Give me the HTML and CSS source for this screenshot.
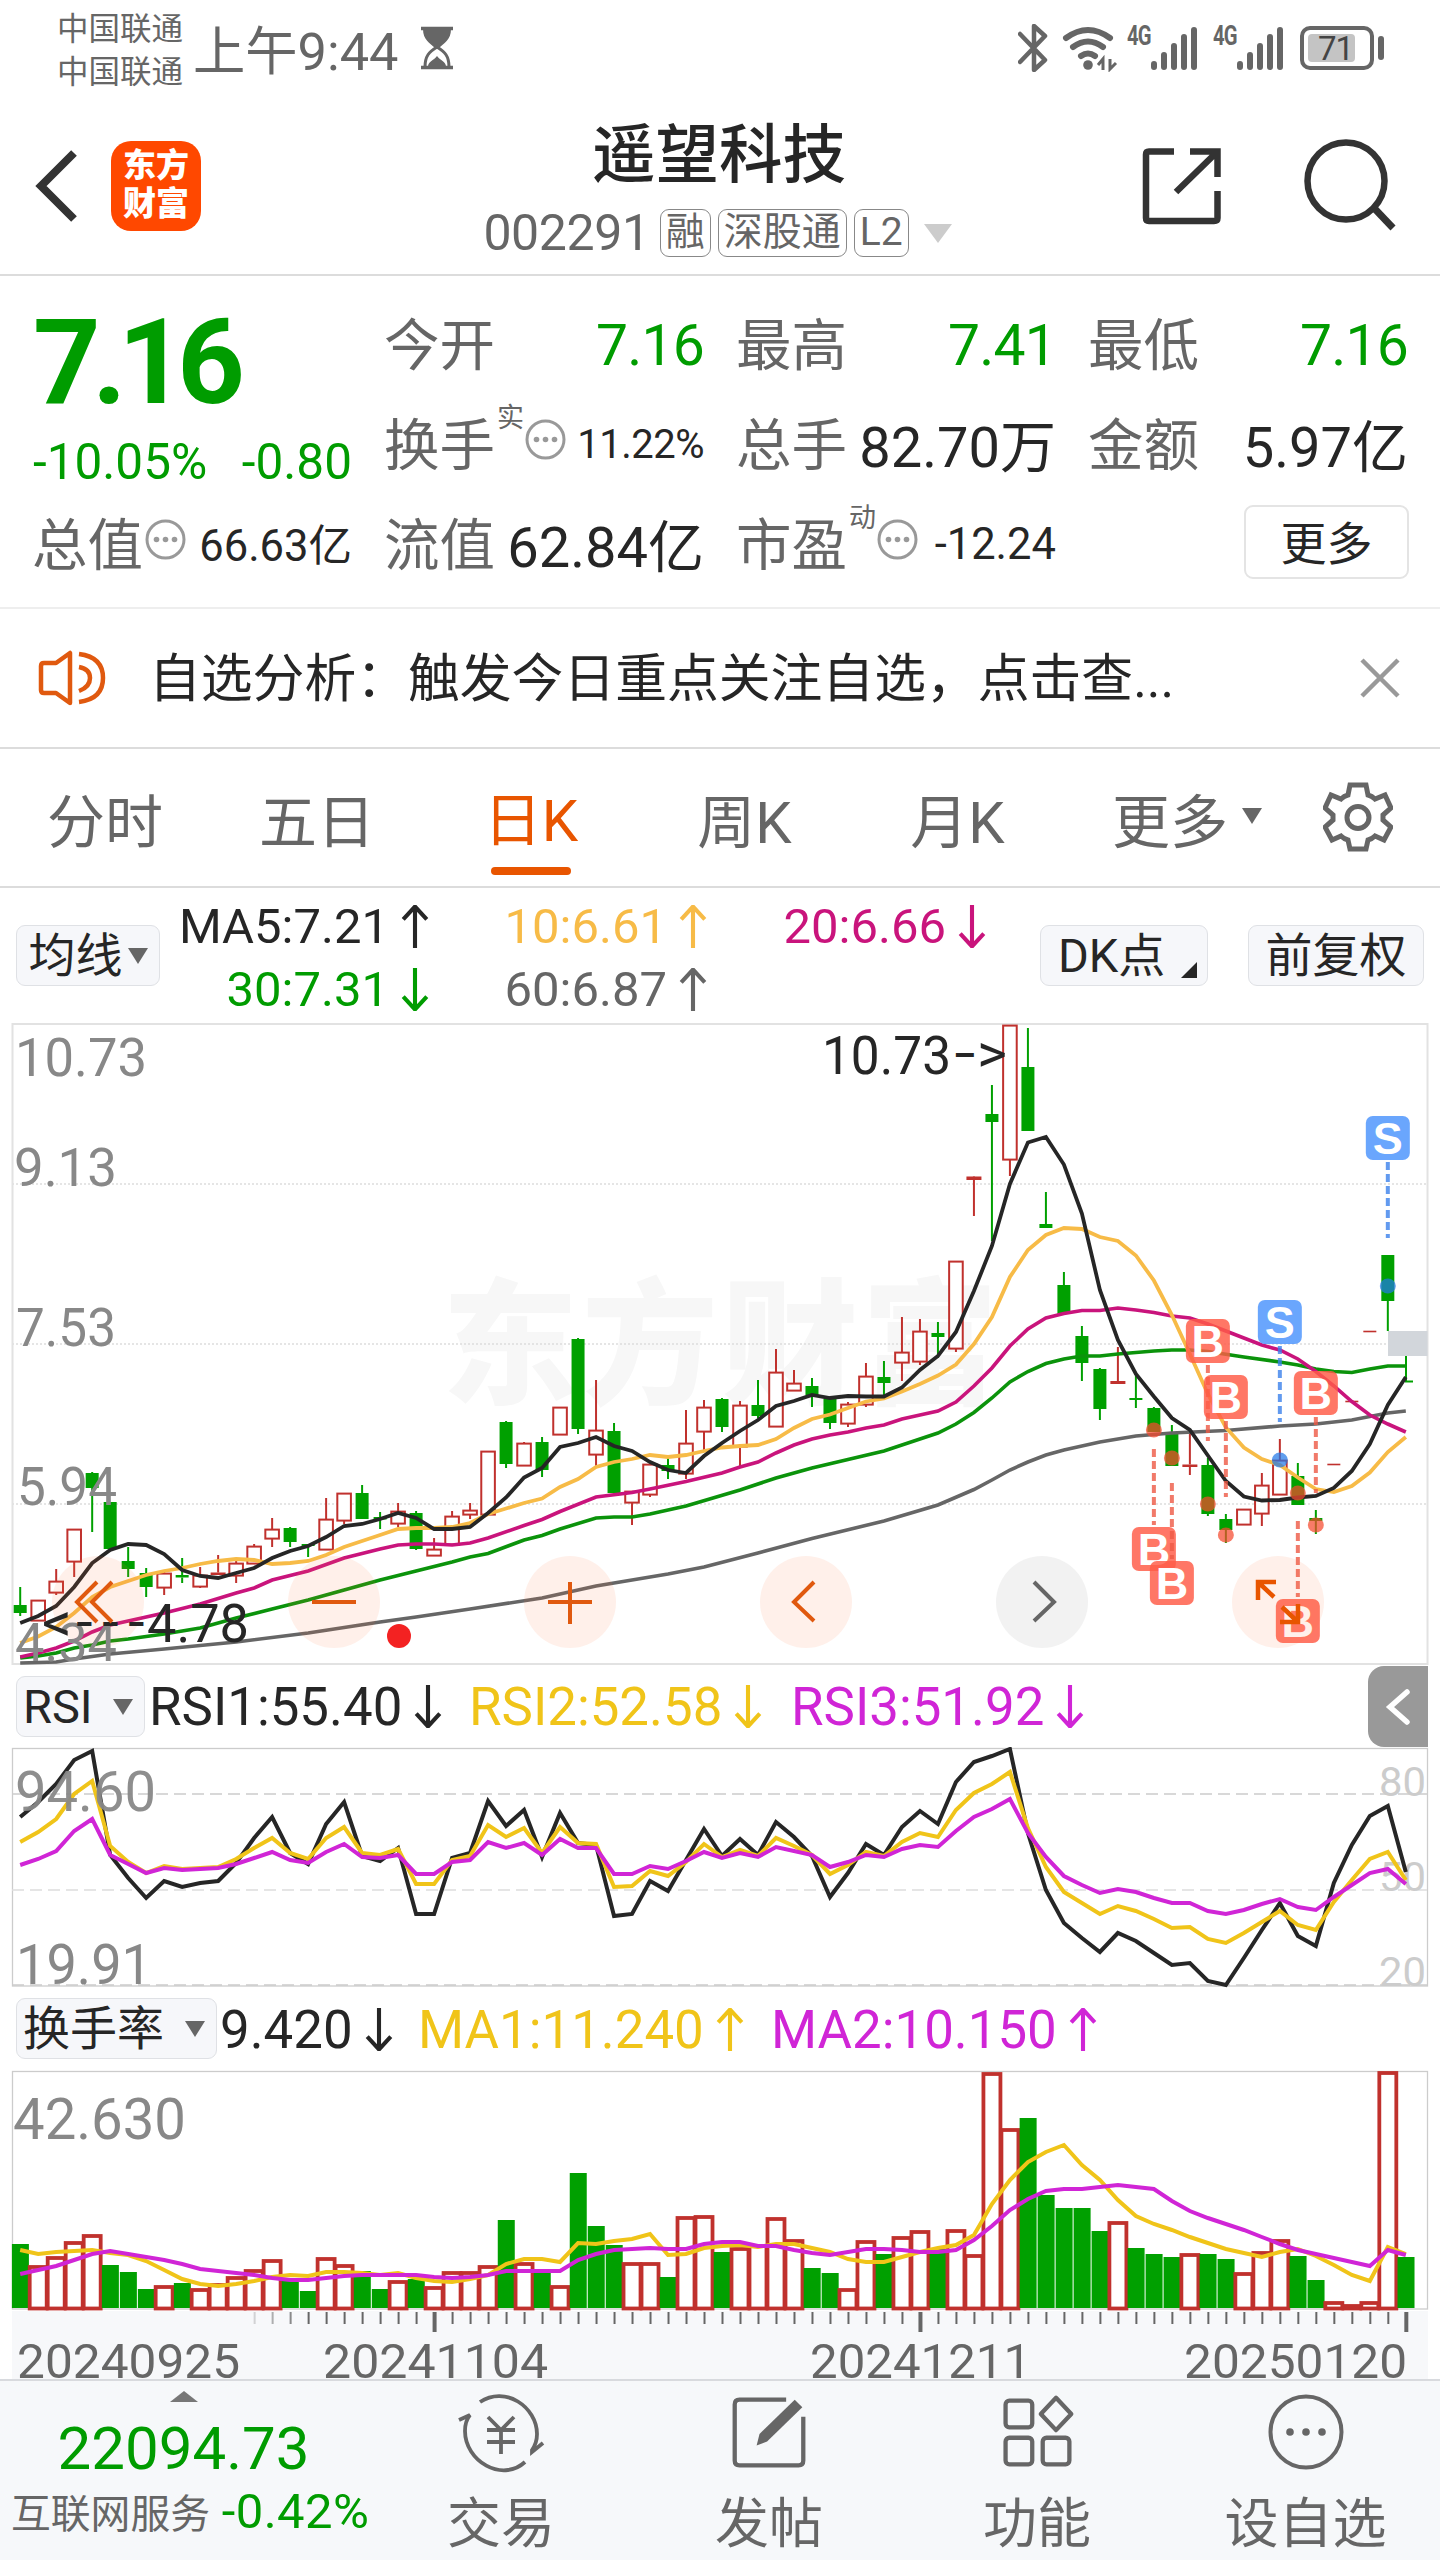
FILE: index.html
```html
<!DOCTYPE html>
<html lang="zh-CN">
<head>
<meta charset="utf-8">
<title>遥望科技 002291</title>
<link rel="stylesheet" href="styles.css">
</head>
<body>
<svg class="defs" width="0" height="0">
  <symbol id="up" viewBox="0 0 27 42"><path d="M13.500 42V1.500M2 14L13.500 1.500L25 14" fill="none" stroke="currentColor" stroke-width="4"/></symbol>
  <symbol id="down" viewBox="0 0 27 42"><path d="M13.500 0V40.500M2 28L13.500 40.500L25 28" fill="none" stroke="currentColor" stroke-width="4"/></symbol>
  <symbol id="tri" viewBox="0 0 20 16"><path d="M0 0H20L10 16Z" fill="currentColor"/></symbol>
  <symbol id="info" viewBox="0 0 41 41"><circle cx="20.500" cy="20.500" r="18.500" fill="none" stroke="#999" stroke-width="3"/><circle cx="11.500" cy="20.500" r="2.800" fill="#999"/><circle cx="20.500" cy="20.500" r="2.800" fill="#999"/><circle cx="29.500" cy="20.500" r="2.800" fill="#999"/></symbol>
  <symbol id="bars" viewBox="0 0 46 44"><path d="M3 38V41M13 29V41M23 20V41M33 11V41M43 4V41" stroke="#666" stroke-width="6" stroke-linecap="round"/></symbol>
</svg>

<header class="status">
  <div class="carriers"><span>中国联通</span><span>中国联通</span></div>
  <span class="clock">上午9:44</span>
  <svg class="glass" width="34" height="44" viewBox="0 0 34 44"><path d="M1 2.500H33M1 41.500H33" stroke="#666" stroke-width="3.500"/><path d="M3 3H31C31 14 24 17 19 22H15C10 17 3 14 3 3Z" fill="#666"/><path d="M17 21C9 26 5 30 5 41M17 21C25 26 29 30 29 41" fill="none" stroke="#666" stroke-width="3"/><path d="M8 40C9 35 13 35 17 30C21 35 25 35 26 40Z" fill="#666"/></svg>
  <div class="radios">
    <svg width="30" height="48" viewBox="0 0 30 48"><path d="M2 10L27 36L16 46V2L27 12L2 38" fill="none" stroke="#666" stroke-width="4.500" stroke-linejoin="round" stroke-linecap="round"/></svg>
    <svg class="wifi" width="56" height="46" viewBox="0 0 56 46"><g fill="none" stroke="#666" stroke-width="6" stroke-linecap="round"><path d="M4 12Q26-4 48 12M11 21Q26 10 41 21M19 30Q26 25 33 30"/></g><circle cx="26" cy="39" r="4.800" fill="#666"/><path d="M36 39L41 33V44M54 37L48 43V33" fill="none" stroke="#666" stroke-width="3"/></svg>
    <span class="net">4G</span><svg width="46" height="44"><use href="#bars"/></svg>
    <span class="net second">4G</span><svg width="46" height="44"><use href="#bars"/></svg>
    <div class="battery"><span>71</span></div><i class="knob"></i>
  </div>
</header>

<nav class="top">
  <svg class="back" width="46" height="80" viewBox="0 0 46 80"><path d="M41 7L8 40L41 73" fill="none" stroke="#333" stroke-width="8"/></svg>
  <div class="logo"><span>东方</span><span>财富</span></div>
  <div class="title">
    <h1>遥望科技</h1>
    <div class="sub"><span class="code">002291</span><span class="tag">融</span><span class="tag">深股通</span><span class="tag">L2</span><svg class="drop" width="28" height="19" viewBox="0 0 20 16" preserveAspectRatio="none"><use href="#tri"/></svg></div>
  </div>
  <svg class="share" width="80" height="80" viewBox="0 0 80 80"><path d="M32 5.500H7Q4 5.500 4 8.500V72Q4 75 7 75H72Q75.500 75 75.500 72V45M48 5.500H75.500V31M75 6L34 46" fill="none" stroke="#333" stroke-width="6.500"/></svg>
  <svg width="94" height="94" viewBox="0 0 94 94"><circle cx="43" cy="43" r="38.500" fill="none" stroke="#333" stroke-width="6.500"/><path d="M71 70L90 90" stroke="#333" stroke-width="7"/></svg>
</nav>

<section class="quote">
  <div class="price"><strong>7.16</strong><p><span>-10.05%</span><span>-0.80</span></p></div>
  <div class="cell"><span class="label">今开</span><span class="val green">7.16</span></div>
  <div class="cell"><span class="label">最高</span><span class="val green">7.41</span></div>
  <div class="cell"><span class="label">最低</span><span class="val green">7.16</span></div>
  <div class="cell"><span class="label">换手<sup>实</sup><svg width="41" height="41"><use href="#info"/></svg></span><span class="val pct">11.22%</span></div>
  <div class="cell"><span class="label">总手</span><span class="val cjk">82.70万</span></div>
  <div class="cell"><span class="label">金额</span><span class="val cjk">5.97亿</span></div>
  <div class="cell"><span class="label">总值<svg class="near" width="41" height="41"><use href="#info"/></svg></span><span class="val small cjk">66.63亿</span></div>
  <div class="cell"><span class="label">流值</span><span class="val cjk">62.84亿</span></div>
  <div class="cell"><span class="label">市盈<sup>动</sup><svg width="41" height="41"><use href="#info"/></svg></span><span class="val small">-12.24</span></div>
  <div class="cell end"><button class="more">更多</button></div>
</section>

<section class="notice">
  <svg width="68" height="58" viewBox="0 0 68 58"><g fill="none" stroke="#e0590f" stroke-width="4.500" stroke-linejoin="round"><path d="M32 4V54L18 44H6Q3 44 3 41V17Q3 14 6 14H18Z"/><path d="M41 18Q52 20 52 29Q52 38 41 42M41 5Q65 8 65 29Q65 50 41 53"/></g></svg>
  <p>自选分析：触发今日重点关注自选，点击查...</p>
  <svg width="40" height="40" viewBox="0 0 40 40"><path d="M2 2L38 38M38 2L2 38" stroke="#999" stroke-width="4.500"/></svg>
</section>

<nav class="tabs">
  <span>分时</span><span>五日</span><span class="on">日K</span><span>周K</span><span>月K</span><span>更多<svg width="20" height="16"><use href="#tri"/></svg></span>
  <svg class="gear" width="70" height="70" viewBox="0 0 70 70"><path d="M27 3H43L45 13Q49 14 52 17L62 13L68 26L60 33V38L68 45L61 58L52 54Q49 57 45 58L43 67H27L25 58Q21 57 18 54L9 58L2 45L10 38V33L2 26L8 13L18 17Q21 14 25 13Z" fill="none" stroke="#666" stroke-width="5"/><circle cx="35" cy="35.500" r="11" fill="none" stroke="#666" stroke-width="5"/></svg>
</nav>

<section class="averages">
  <button class="chip">均线<svg width="20" height="16"><use href="#tri"/></svg></button>
  <div class="ma">
    <span>MA5:7.21<svg><use href="#up"/></svg></span>
    <span class="c10">10:6.61<svg><use href="#up"/></svg></span>
    <span class="c20">20:6.66<svg><use href="#down"/></svg></span>
    <span class="c30">30:7.31<svg><use href="#down"/></svg></span>
    <span class="c60">60:6.87<svg><use href="#up"/></svg></span>
  </div>
  <button class="chip dk">DK点<i></i></button>
  <button class="chip fq">前复权</button>
</section>

<svg id="kline" width="1440" height="643" viewBox="0 1023 1440 643"></svg>

<section class="indicator rsi">
  <button class="chip">RSI<svg width="20" height="16"><use href="#tri"/></svg></button>
  <span class="v1">RSI1:55.40<svg><use href="#down"/></svg></span>
  <span class="v2">RSI2:52.58<svg><use href="#down"/></svg></span>
  <span class="v3">RSI3:51.92<svg><use href="#down"/></svg></span>
  <div class="handle"><svg width="30" height="40" viewBox="0 0 30 40"><path d="M24 5L7 20L24 35" fill="none" stroke="#fff" stroke-width="5.500" stroke-linecap="round"/></svg></div>
</section>

<svg id="rsi" width="1440" height="241" viewBox="0 1747 1440 241"></svg>

<section class="indicator turnover">
  <button class="chip">换手率<svg width="20" height="16"><use href="#tri"/></svg></button>
  <span class="v1">9.420<svg><use href="#down"/></svg></span>
  <span class="v2">MA1:11.240<svg><use href="#up"/></svg></span>
  <span class="v3">MA2:10.150<svg><use href="#up"/></svg></span>
</section>

<svg id="turnover" width="1440" height="309" viewBox="0 2070 1440 309"></svg>

<footer class="dock">
  <div class="index">
    <svg width="28" height="11" viewBox="0 0 28 11"><path d="M0 11L14 0L28 11Z" fill="#777"/></svg>
    <strong>22094.73</strong>
    <p>互联网服务 <b>-0.42%</b></p>
  </div>
  <div class="item"><svg width="88" height="80" viewBox="0 0 88 80"><g fill="none" stroke="#666" stroke-width="3.800"><path d="M23 9C48-8 80 14 80 41Q80 50 75 57V59L86 50M68 69C45 90 8 68 8 38Q8 28 13 22L2 27"/><path d="M31 24L44 37L57 24M44 37V61M30 37H58M30 49H58"/></g></svg><span>交易</span></div>
  <div class="item"><svg width="80" height="80" viewBox="-2 -2 84 84"><path d="M58 5H9Q4 5 4 10V69Q4 74 9 74H71Q76 74 76 69V23" fill="none" stroke="#666" stroke-width="4.500"/><path d="M27 53L30 41L67 5L75 13L38 49Z" fill="#666"/></svg><span>发帖</span></div>
  <div class="item"><svg width="80" height="80" viewBox="-2 -2 84 84"><g fill="none" stroke="#666" stroke-width="4.500"><rect x="7" y="6" width="28" height="28" rx="4"/><rect x="7" y="45" width="28" height="28" rx="4"/><rect x="46" y="45" width="28" height="28" rx="4"/><path d="M60 3L76 20L60 37L44 20Z" stroke-linejoin="round"/></g></svg><span>功能</span></div>
  <div class="item"><svg width="80" height="80" viewBox="0 0 80 80"><circle cx="40" cy="39" r="35.500" fill="none" stroke="#666" stroke-width="4"/><g fill="#666"><circle cx="24" cy="39" r="3.800"/><circle cx="40" cy="39" r="3.800"/><circle cx="56" cy="39" r="3.800"/></g></svg><span>设自选</span></div>
</footer>
<script src="charts.js"></script>
</body>
</html>
```
FILE: styles.css
```css
* { box-sizing: border-box; }
body { margin: 0; width: 1440px; height: 2560px; overflow: hidden; background: #fff; color: #262626; font-family: Roboto, "Noto Sans CJK SC", sans-serif; display: flex; flex-direction: column; }
body > * { flex: none; }
h1, p { margin: 0; font-weight: 400; }
svg { display: block; flex: none; }
.defs { position: absolute; }
button { font: inherit; color: inherit; background: none; border: 0; padding: 0; display: flex; align-items: center; justify-content: center; white-space: nowrap; }
.green { color: #009c00; }

.status { height: 100px; display: flex; align-items: flex-start; padding-left: 57px; color: #666; }
.carriers { width: 136px; padding-top: 8px; display: flex; flex-direction: column; font-size: 31.500px; line-height: 43px; }
.clock { width: 227px; padding-top: 20px; font-size: 52.300px; line-height: 64px; white-space: nowrap; }
.glass { margin-top: 26px; }
.radios { margin-left: 564px; padding-top: 24px; display: flex; align-items: flex-start; }
.wifi { margin: 2px 0 0 14px; }
.radios svg + .net { margin-left: 9px; }
.radios svg + .net.second { margin-left: 16px; }
.radios .net + svg { margin-top: 2px; }
.net { width: 24px; font-size: 27px; line-height: 24px; font-weight: 700; letter-spacing: -1px; transform: scaleX(.75); transform-origin: 0 0; }
.battery { margin: 2px 0 0 17px; width: 74px; height: 44px; border: 4px solid #666; border-radius: 10px; padding: 4px; }
.battery span { display: block; width: 47px; height: 28px; border-radius: 4px; background: #c4c4c4; color: #444; font-size: 33px; line-height: 29px; padding-left: 10px; letter-spacing: -1px; }
.knob { width: 6px; height: 24px; margin: 12px 0 0 4px; border-radius: 3px; background: #666; }

.top { height: 176px; border-bottom: 2px solid #dcdcdc; display: flex; align-items: flex-start; }
.back { margin: 46px 0 0 33px; }
.logo { margin: 41px 0 0 32px; width: 90px; height: 90px; border-radius: 20px; background: #ff4800; color: #fff; font-weight: 900; font-size: 33px; line-height: 38px; display: flex; flex-direction: column; align-items: center; padding-top: 6px; }
.title { width: 800px; margin-left: 118px; display: flex; flex-direction: column; align-items: center; }
h1 { margin-top: 14px; font-size: 63.500px; line-height: 84px; font-weight: 500; }
.sub { margin: 11px 3px 0 0; display: flex; align-items: center; color: #666; }
.code { font-size: 50px; line-height: 48px; letter-spacing: -.4px; margin-right: 10px; }
.tag { height: 48px; padding: 0 5px; border: 1.500px solid #888; border-radius: 9px; font-size: 39px; line-height: 44px; margin-right: 7px; }
.drop { color: #ccc; margin-left: 8px; }
.share { margin: 46px 81px 0 23px; }
.top > svg:last-child { margin-top: 38px; }

.quote { height: 333px; padding: 18px 33px 0 35px; border-bottom: 2px solid #eee; display: grid; grid-template-columns: repeat(4, 317px); grid-template-rows: repeat(3, 100px); column-gap: 35px; }
.price { grid-row: 1 / 3; color: #009c00; }
.price strong { display: block; font-size: 118px; line-height: 118px; margin: 10px 0 0 -2px; font-weight: 700; letter-spacing: -8.500px; }
.price p { display: flex; justify-content: space-between; font-size: 49.500px; line-height: 60px; margin: 10px 0 0 -2px; }
.cell { display: flex; align-items: center; justify-content: space-between; white-space: nowrap; }
.cell.end { justify-content: flex-end; }
.label { display: flex; align-items: center; font-size: 55.500px; color: #666; padding-bottom: 6px; margin-left: -3px; }
.label sup { font-size: 27px; line-height: 30px; margin: 0 1px 46px 2px; }
.label svg { margin-bottom: 4px; }
.label .near { margin-left: 2px; }
.val { font-size: 56px; }
.val.cjk { padding-bottom: 4px; }
.val.green { font-size: 57px; letter-spacing: -.8px; padding-top: 2px; }
.val.pct { font-size: 40px; letter-spacing: -.5px; }
.val.small { font-size: 43.500px; }
.more { width: 165px; height: 74px; margin: -5px -1px 0 0; padding-bottom: 4px; border: 2px solid #e4e4e4; border-radius: 9px; font-size: 46px; }

.notice { height: 140px; border-bottom: 2px solid #dcdcdc; display: flex; align-items: center; padding: 0 40px 1px 38px; }
.notice p { flex: 1; padding: 4px 0 0 43px; font-size: 51.800px; line-height: 70px; white-space: nowrap; }

.tabs { height: 139px; border-bottom: 2px solid #dcdcdc; display: grid; grid-template-columns: 210px 214px 214px 213px 213px 246px 1fr; align-items: center; font-size: 58px; color: #666; }
.tabs span { display: flex; align-items: center; justify-content: center; height: 100%; white-space: nowrap; }
.tabs span svg { margin: 0 0 4px 14px; }
.tabs .on { color: #e85500; flex-direction: column; padding-top: 21px; line-height: 80px; }
.tabs .on::after { content: ""; width: 80px; height: 8px; margin: 6px 0 0 0; border-radius: 4px; background: #e85500; }
.gear { margin: 0 0 1px 13px; }

.averages { height: 135px; display: grid; grid-template-columns: 144px 880px 168px 176px; padding-left: 16px; align-items: start; }
.chip { height: 61px; margin-top: 37px; border: 1.500px solid #dfe1e5; border-radius: 9px; background: #f6f7fa; font-size: 47px; line-height: 60px; }
.averages .chip svg { color: #666; margin-left: 5px; }
.chip.dk { justify-content: flex-start; padding-left: 17px; gap: 16px; }
.dk i { border: solid transparent; border-width: 0 0 16px 16px; border-bottom-color: #262626; margin-top: 28px; }
.chip.fq { margin-left: 40px; width: 176px; }
.ma { display: grid; grid-template-columns: 269px 278px 279px; grid-template-rows: 63px 63px; padding-top: 7px; }
.ma span { display: flex; align-items: center; justify-content: flex-end; font-size: 49px; line-height: 63px; }
.ma svg, .indicator span svg { width: 28px; height: 43px; margin-left: 12px; }
.c10 { color: #f7bb47; }
.c20 { color: #c9147c; }
.c30 { color: #009c00; }
.c60 { color: #666; }

.indicator { height: 81px; display: flex; padding-left: 16px; font-size: 52.800px; line-height: 80px; }
.indicator .chip { margin-top: 10px; justify-content: space-between; padding: 0 11px 0 6px; width: 129px; }
.indicator .chip svg { color: #666; }
.indicator span { display: flex; align-items: center; white-space: nowrap; }
.indicator .v1 { width: 324px; padding-left: 4px; }
.indicator .v2 { width: 322px; color: #f0c419; }
.v3 { color: #d025d6; }
.handle { margin-left: auto; width: 60px; margin-right: 12px; background: #999; border-radius: 16px 0 0 16px; display: flex; align-items: center; justify-content: center; }
.turnover { height: 82px; padding-top: 1px; }
.turnover .chip { width: 201px; margin-top: 9px; }
.turnover .v1 { width: 201px; padding-left: 3px; }
.turnover .v2 { width: 353px; }

.dock { height: 181px; border-top: 2px solid #d8dade; background: #f6f8fa; display: grid; grid-template-columns: 367px 268px 268px 268px 269px; }
.index { display: flex; flex-direction: column; align-items: center; padding-top: 10px; color: #009c00; }
.index strong { font-size: 60px; line-height: 76px; font-weight: 400; margin-top: 9px; }
.index p { font-size: 39.800px; line-height: 50px; color: #666; white-space: nowrap; align-self: flex-start; padding-left: 11px; }
.index b { font-weight: 400; font-size: 49px; letter-spacing: .4px; margin-left: 2px; color: #009c00; }
.item { display: flex; flex-direction: column; align-items: center; padding-top: 12px; font-size: 54px; line-height: 70px; color: #666; gap: 17px; }
```
FILE: charts.js
```js
// Shared horizontal scale: one trading day every 18px.
const X = i => 20.2 + 17.995 * i;
const RED = '#c0312d', GREEN = '#00a000';

const line = (x1, y1, x2, y2, stroke, w, extra = '') =>
  `<line x1="${x1}" y1="${y1}" x2="${x2}" y2="${y2}" stroke="${stroke}" stroke-width="${w}" ${extra}/>`;
const rect = (x, y, w, h, attrs) => `<rect x="${x}" y="${y}" width="${w}" height="${h}" ${attrs}/>`;
const label = (x, y, size, text, width, fill, extra = '') =>
  `<text x="${x}" y="${y}" font-size="${size}" fill="${fill}" textLength="${width}" lengthAdjust="spacingAndGlyphs" ${extra}>${text.replace('<', '&lt;')}</text>`;
const dense = (ys, color, w) =>
  `<polyline fill="none" stroke="${color}" stroke-width="${w}" points="${ys.map((y, i) => X(i) + ',' + y).join(' ')}"/>`;
const sparse = (pts, color, w) =>
  `<polyline fill="none" stroke="${color}" stroke-width="${w}" points="${pts.map(([i, y]) => X(i) + ',' + y).join(' ')}"/>`;

// type, high, body top, body bottom, low
const candles = [
['g',1587,1605,1613,1616],['r',1600,1600,1620,1620],['r',1569,1581,1592,1595],['r',1529,1529,1561,1577],['g',1472,1473,1488,1532],['g',1502,1502,1549,1549],['g',1547,1561,1569,1577],['g',1568,1573,1587,1597],['r',1570,1573,1587,1595],['g',1558,1575,1577.500,1583],
['r',1567,1575,1586,1588],['r',1555,1572.500,1575,1575],['r',1561,1563,1575,1583],['r',1544,1546,1563,1563],['r',1518,1529,1538,1547],['g',1527,1528,1542,1547],['g',1544,1544,1546,1557],['r',1498,1519,1549,1549],['r',1493,1493,1520,1524],['g',1485,1493,1519,1519],
['g',1512,1517,1519.500,1529],['r',1503,1511,1523,1527],['g',1511,1513,1549,1550],['r',1538,1549,1555,1555],['r',1511,1516,1544,1544],['r',1503,1510,1514,1519],['r',1451,1451,1514,1514],['g',1421,1422,1464,1468],['r',1442,1443,1465,1465],['g',1437,1442,1470,1477],
['r',1407,1407,1434,1434],['g',1338,1339,1429,1434],['r',1380,1430,1454,1466],['g',1423,1431,1493,1493],['r',1491,1491,1502,1525],['r',1464,1464,1494,1497],['g',1458,1465,1471,1479],['r',1410,1443,1473,1479],['r',1400,1407,1431,1450],['g',1398,1399,1427,1432],
['r',1401,1405,1446,1466],['g',1380,1405,1416,1418],['r',1349,1372,1426,1426],['r',1370,1383,1390,1390],['g',1378,1386,1395,1407],['g',1399,1399,1423,1429],['r',1402,1404,1423,1427],['r',1363,1376,1404,1407],['g',1361,1377,1383,1395],['r',1317,1352,1362,1381],
['r',1319,1331,1361,1365],['g',1322,1333,1337,1358],['r',1261,1261,1348,1352],['r',1176,1176.500,1180,1216],['g',1085,1114,1122,1241],['r',1025,1025,1159,1176],['g',1028,1067,1131,1131],['g',1192,1224,1228,1228],['g',1272,1285,1314,1314],['g',1326,1336,1363,1381],
['g',1368,1369,1409,1420],['r',1347,1381,1384,1384],['g',1374,1398,1400,1408],['g',1407,1408,1432,1432],['g',1425,1434,1466,1466],['r',1432,1464.500,1467,1475],['g',1458,1465,1514,1516],['g',1514,1519,1530,1543],['r',1509,1509,1524,1524],['r',1473,1485,1513,1526],
['r',1439,1460,1494,1494],['g',1463,1476,1505,1505],['g',1510,1518,1521,1534],['d',1464.500],['d',1401.500],['d',1331.500],['g',1255,1255,1301,1331]];

const ma5 = [1623,1616,1606,1587,1563,1550,1544,1545,1554,1570,1576,1578,1573,1568,1558,1551,1546,1537,1526,1524,1519,1513,1518,1529,1529,1527,1513,1497.500,1477.500,1468,1447,1443,1437,1446,1451,1462,1470,1473,1456,1443,1431,1420,1406,1401,1395,1398,1396,1396.500,1396.500,1387.500,1370,1356,1332,1291,1246,1184,1142.500,1137,1164.500,1213.500,1290,1340,1374,1396.500,1418,1430,1455.500,1481,1496.500,1500.500,1500,1497.500,1496,1488,1471,1444,1405,1377];
const ma10 = [1643,1636.500,1627,1613,1597,1587,1581,1575,1571,1568,1564,1561,1559,1560,1564,1563,1561,1555,1547,1541,1535,1529,1528,1528,1527,1523,1514,1508.500,1503,1498.500,1487,1479,1467,1462,1459,1455,1457,1455,1451,1447.500,1446,1445,1439,1428,1419,1414.500,1408,1401.500,1398.500,1391.500,1384,1375.500,1364.500,1344,1317,1277,1250,1235,1228,1229,1237,1241,1255.500,1280.500,1315,1354,1394,1427.500,1447.500,1459,1465,1477.500,1489,1492,1486,1472.500,1452,1437];
const ma20 = [[0,1657],[1,1653],[2,1648],[3,1641],[4,1632],[5,1625],[6,1621],[8,1613],[10,1604],[12,1593],[13,1588],[14,1580],[16,1571],[18,1558],[20,1549],[21,1545],[22,1544],[23,1544],[24,1545],[25,1543],[26,1538],[28,1525.500],[29,1519.500],[30,1511.500],[32,1497],[34,1492.500],[35,1489],[37,1481.500],[39,1473],[40,1467],[41,1462],[42,1453],[43,1445],[44,1439],[45,1435],[46,1432],[47,1428],[48,1425],[49,1419],[50,1415],[51,1411],[52,1402],[53,1386],[54,1368],[55,1346],[56,1329],[57,1318],[58,1313.500],[59,1310.500],[60,1310.500],[61,1308],[62,1310],[63,1312.500],[64,1316],[65,1318],[66,1324],[67,1331],[68,1338],[69,1345],[70,1350],[71,1359],[72,1371.500],[73,1386],[74,1401.500],[75,1415],[76,1424],[77,1432]];
const ma30 = [[0,1658],[1,1656],[2,1653],[3,1648],[4,1645],[5,1641],[6,1639],[8,1634],[10,1628],[12,1618],[14,1609],[16,1600],[18,1590],[20,1580],[22,1571],[24,1562],[25,1557],[26,1553.500],[28,1540],[29,1535.500],[30,1529],[32,1518],[33,1517],[34,1517],[35,1514],[37,1506],[40,1490],[42,1478],[44,1468],[46,1459.500],[48,1451],[50,1439],[51,1433],[52,1424],[53,1412.500],[54,1398],[55,1382],[56,1371.500],[57,1363.500],[58,1359],[59,1356],[60,1356],[61,1354],[63,1351],[64,1350],[65,1350],[66,1351.500],[68,1357],[70,1362],[71,1365],[72,1369],[73,1371.500],[74,1372.500],[75,1369],[76,1366],[77,1366]];
const ma60 = [[0,1663],[2,1662],[3,1659],[5,1654],[8,1649],[12,1642],[16,1633],[20,1622],[22,1617],[25,1609],[29,1598],[32,1586],[36,1574],[38,1567],[41,1553],[44,1538.500],[48,1521],[51,1505],[53,1489.500],[54,1480],[55,1470],[56,1462],[57,1455],[58,1450],[60,1442],[62,1436],[64,1433],[67,1430.500],[70,1426],[72,1424],[74,1420],[76,1413],[77,1411]];

function drawKline() {
  let s = `<text x="442" y="1394" font-size="136" font-weight="900" letter-spacing="4" fill="#f7f7f7">东方财富</text>`;
  for (const y of [1184, 1344, 1504]) s += line(12, y, 1427, y, '#ddd', 1.5, 'stroke-dasharray="2 2"');
  s += rect(12.5, 1024, 1415, 640, 'fill="none" stroke="#e2e2e2" stroke-width="2"');
  candles.forEach(([t, hi, top, bot, lo], i) => {
    const x = X(i);
    if (t === 'd') { s += line(x - 6.5, hi, x + 6.5, hi, RED, 1.6); return; }
    const c = t === 'r' ? RED : GREEN;
    if (hi < top) s += line(x, hi, x, top, c, 2);
    if (lo > bot) s += line(x, bot, x, lo, c, 2);
    if (t === 'g') s += rect(x - 6.5, top, 13, bot - top, `fill="${GREEN}"`);
    else if (bot - top < 4) s += rect(x - 7.5, top, 15, bot - top, `fill="${RED}"`);
    else s += rect(x - 6.8, top + .6, 13.6, bot - top, `fill="#fff" stroke="${RED}" stroke-width="2"`);
  });
  s += line(1406, 1356, 1406, 1382, GREEN, 2) + line(1405, 1381.5, 1413, 1381.5, GREEN, 2);
  s += sparse(ma60, '#666', 3.6) + sparse(ma30, '#0b930b', 3.6) + sparse(ma20, '#c9147c', 3.6) + dense(ma10, '#f7bb47', 3.8) + dense(ma5, '#262626', 3.8);
  s += rect(1388, 1331, 39.5, 25, 'fill="#d2d6db"');
  const marks = [['S',76,1138,1162,1286],['S',70,1322,1346,1460],['B',66,1341,1365,1504],['B',67,1397,1421,1535],['B',72,1393,1417,1525],['B',63,1549,1449,1430],['B',64,1583,1483,1458],['B',71,1621,1521,1493]];
  for (const [t, i, y, dash, dot] of marks) {
    const x = X(i), blue = t === 'S';
    s += line(x, dash, x, dash + 76, blue ? '#3b82ec' : '#ee5a45', 4, 'stroke-dasharray="8 4" opacity=".8"');
    s += `<ellipse cx="${x}" cy="${dot}" rx="8" ry="7.5" fill="${blue ? '#2378e8' : '#f5492e'}" opacity=".72"/>`;
    s += rect(x - 22, y - 22, 44, 44, `rx="7" fill="${blue ? '#4c94fc' : '#ff5b47'}" opacity=".83"`);
    s += `<text x="${x}" y="${y + 16}" font-family="Liberation Sans, Arial, sans-serif" font-size="45" font-weight="700" text-anchor="middle" fill="#fff">${t}</text>`;
  }
  [98, 334, 570, 806, 1042, 1278].forEach((x, k) => s += `<circle cx="${x}" cy="1602" r="46" fill="${k === 4 ? '#999' : '#ff7a3c'}" opacity="${k === 4 ? .13 : .11}"/>`);
  [[[15,1076],'10.73',132],[[14,1186],'9.13',103],[[16,1346],'7.53',100],[[17,1505],'5.94',100],[[15,1661],'4.34',102]].forEach(([p, t, w]) => s += label(p[0], p[1], 54, t, w, '#888'));
  s += label(822, 1074, 53, '10.73', 129, '#262626') + label(953, 1074, 53, '–', 24, '#262626') + label(977, 1072, 53, '>', 30, '#262626');
  s += label(42, 1641, 53, '<', 30, '#262626') + label(75, 1643, 53, '– – –', 71, '#262626') + label(147, 1642, 53, '4.78', 102, '#262626');
  const o = 'fill="none" stroke="#e0590f" stroke-width="4"';
  s += `<path ${o} d="M97 1582L77 1602L97 1622M112 1582L92 1602L112 1622M312 1602H356M548 1602H592M570 1582V1624M814 1582L794 1602L814 1621"/>`;
  s += `<path fill="none" stroke="#666" stroke-width="4" d="M1034 1582L1054 1602L1034 1621"/>`;
  s += `<path fill="none" stroke="#e85500" stroke-width="4.500" d="M1258 1600V1582H1276M1258 1582L1274 1597M1280 1622H1298V1604M1298 1622L1282 1607"/>`;
  s += '<circle cx="399" cy="1636" r="12" fill="#f32222"/>';
  document.getElementById('kline').innerHTML = s;
}

const rsi1 = [1817,1802,1784,1760,1751,1855,1878,1898,1881,1887,1883,1881,1863,1838,1817,1853,1864,1824,1802,1856,1861,1848,1914,1914,1858,1853,1801,1826,1810,1857,1813,1843,1845,1916,1914,1881,1891,1860,1829,1856,1839,1855,1822,1837,1856,1897,1873,1844,1855,1827,1811,1824,1782,1762,1756,1749,1833,1890,1923,1938,1952,1933,1941,1953,1965,1963,1981,1985,1958,1930,1903,1936,1946,1883,1845,1816,1806,1872];
const rsi2 = [1842,1832,1819,1794,1781,1846,1862,1873,1866,1869,1868,1867,1859,1848,1838,1853,1859,1838,1827,1853,1855,1849,1884,1884,1860,1856,1825,1837,1828,1853,1827,1843,1844,1887,1886,1871,1876,1862,1844,1857,1850,1856,1838,1846,1855,1874,1865,1852,1856,1842,1833,1837,1810,1793,1784,1772,1828,1867,1892,1903,1914,1906,1911,1919,1928,1927,1939,1943,1933,1922,1911,1925,1930,1902,1880,1859,1852,1880];
const rsi3 = [1865,1859,1851,1831,1819,1855,1864,1873,1868,1870,1869,1868,1864,1858,1852,1860,1863,1852,1844,1857,1858,1855,1874,1874,1862,1860,1842,1848,1843,1855,1839,1848,1848,1874,1874,1866,1869,1861,1852,1858,1853,1857,1847,1851,1855,1867,1862,1855,1857,1849,1845,1847,1831,1817,1809,1799,1833,1857,1876,1885,1893,1889,1892,1898,1903,1903,1911,1914,1910,1904,1899,1907,1910,1897,1885,1873,1869,1884];

function drawRsi() {
  let s = rect(12.5, 1748.5, 1415, 237.5, 'fill="none" stroke="#ccc" stroke-width="1.300"');
  [[1794, '#ccc'], [1890, '#ddd'], [1985, '#ccc']].forEach(([y, c]) => s += line(12, y, 1427, y, c, 1.5, 'stroke-dasharray="12 6"'));
  [[1796, '80'], [1891, '50'], [1986, '20']].forEach(([y, t]) => s += label(1379, y, 41, t, 47, '#ccc'));
  s += dense(rsi1, '#262626', 4) + dense(rsi2, '#f0c419', 4) + dense(rsi3, '#d025d6', 4);
  s += label(15, 1811, 56, '94.60', 141, '#888', 'opacity=".95"') + label(16, 1984, 56, '19.91', 136, '#888');
  document.getElementById('rsi').innerHTML = s;
}

const volume = 'g2244 r2265 r2256 r2241 r2234 g2265 g2272 g2289 r2285 g2283 r2288 r2283 r2276 r2269 r2259 g2279 g2291 r2257 r2264 g2271 g2289 r2280 g2279 r2286 r2271 r2271 r2265 g2220 r2262 g2272 r2285 g2173 g2226 g2245 r2262 r2262 g2277 r2216 r2215 g2252 r2247 r2244 r2217 r2239 g2268 g2273 r2288 r2240 g2254 r2236 r2230 g2249 r2229 r2254 r2072 r2128 g2118 g2195 g2208 g2208 g2231 r2221 g2248 g2254 g2257 r2253 g2254 g2259 r2272 r2251 r2239 g2256 g2280 r2301 r2304 r2301 r2071 g2257'.split(' ');
const vma1 = [2250,2254,2252,2251,2250,2253,2255,2261,2270,2279,2284,2286,2284,2281,2277,2275,2276,2272,2272,2273,2275,2273,2278,2281,2282,2279,2275,2264,2259,2259,2262,2243,2244,2241,2239,2234,2255,2254,2248,2246,2245,2247,2244,2244,2248,2252,2259,2262,2262,2257,2252,2248,2245,2235,2204,2180,2162,2152,2145,2165,2180,2200,2216,2224,2230,2237,2243,2249,2253,2257,2252,2249,2256,2265,2275,2281,2247,2254];
const vma2 = [2274,2270,2266,2260,2254,2251,2254,2257,2260,2264,2269,2271,2273,2275,2278,2280,2280,2278,2276,2275,2275,2275,2275,2277,2278,2277,2275,2271,2271,2271,2271,2260,2254,2250,2249,2248,2249,2249,2244,2242,2242,2246,2246,2250,2253,2255,2252,2249,2249,2250,2252,2252,2250,2240,2226,2210,2199,2191,2189,2189,2187,2185,2187,2189,2201,2211,2218,2224,2230,2237,2244,2250,2254,2258,2262,2266,2250,2255];

function drawTurnover() {
  let s = rect(12, 2311, 1416, 68, 'fill="#f7f8fa"');
  s += rect(12.5, 2071.5, 1415, 237.5, 'fill="none" stroke="#ccc" stroke-width="1.300"');
  volume.forEach((v, i) => {
    const y = +v.slice(1), x = X(i);
    s += v[0] === 'g' ? rect(x - 8.3, y, 17, 2308 - y, `fill="${GREEN}"`)
      : rect(x - 8.5, y + 2, 17, 2306.5 - y, `fill="#fff" stroke="${RED}" stroke-width="3.800"`);
  });
  s += dense(vma1, '#f0c419', 4) + dense(vma2, '#d025d6', 4);
  for (let i = 13; i < 78; i++) {
    const big = i === 23 || i === 50 || i === 77;
    s += line(X(i) + .5, 2312, X(i) + .5, big ? 2332 : 2324, '#666', big ? 4 : 2, `opacity="${Math.min(1, (i - 12) / 4)}"`);
  }
  s += label(13, 2139, 57, '42.630', 173, '#888');
  [[17, '20240925', 223], [323, '20241104', 225], [810, '20241211', 221], [1184, '20250120', 223]].forEach(([x, t, w]) => s += label(x, 2378, 48, t, w, '#666'));
  document.getElementById('turnover').innerHTML = s;
}

drawKline();
drawRsi();
drawTurnover();
```
